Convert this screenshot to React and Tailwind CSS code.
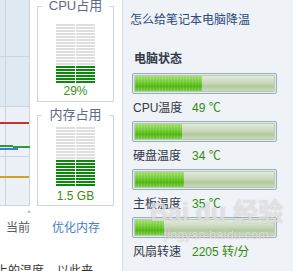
import React from 'react'

const FONT = { fontFamily: '"Liberation Sans", "Noto Sans CJK SC", sans-serif' }

// stripe meter like the old task manager
function Meter({ total = 20, on }) {
  const rows = Array.from({ length: total }, (_, i) => i >= total - on)
  return (
    <div className="flex flex-col gap-[1px]">
      {rows.map((lit, i) => (
        <div key={i} className="flex gap-[1px]">
          <div className={`h-[2px] w-[19px] ${lit ? 'bg-[#0a8a0a]' : 'bg-[#dedede]'}`} />
          <div className={`h-[2px] w-[19px] ${lit ? 'bg-[#0a8a0a]' : 'bg-[#dedede]'}`} />
        </div>
      ))}
    </div>
  )
}

function UsageBox({ title, on, total, value, top, text }) {
  return (
    <fieldset className="w-[77px] border border-[#cdd7e4] flex flex-col items-center">
      <legend className="mx-auto px-[7px] text-[13px] leading-[12px] text-[#5b6b88]">{title}</legend>
      <div className={top}>
        <Meter on={on} total={total} />
      </div>
      <div className={`text-[12px] leading-[14px] text-[#3b8f14] ${text}`}>{value}</div>
    </fieldset>
  )
}

function Bar({ pct }) {
  return (
    <div className="h-[21px] w-[145px] rounded-[2px] border border-[#9aabbf] bg-[#e4eaf1] p-[1px]">
      <div className="flex h-full w-full overflow-hidden rounded-[1px] border border-[#b9c8b0]">
        <div
          className="h-full bg-[repeating-linear-gradient(90deg,rgba(255,255,255,0.12)_0_1px,transparent_1px_3px),linear-gradient(to_bottom,#a4e070,#6cc82e_45%,#4fb512_70%,#78d443)]"
          style={{ width: `${pct}%` }}
        />
        <div className="h-full flex-1 bg-[linear-gradient(to_bottom,#e4ebdc,#c9d8bb_45%,#b3c9a0_70%,#cbdcbc)]" />
      </div>
    </div>
  )
}

function Stat({ label, value }) {
  return (
    <div className="flex h-[27px] items-center pl-[1px] text-[12px]">
      <span className="w-[59px] text-[#333a48]">{label}</span>
      <span className="text-[#2f8c0e]">{value}</span>
    </div>
  )
}

export default function App() {
  return (
    <div className="relative flex h-[271px] w-[293px] overflow-hidden bg-white" style={FONT}>
      {/* left part: graph + usage boxes */}
      <div className="flex w-[122px] flex-col">
        <div className="flex">
          <div className="w-[30px]">
            <div className="relative h-[206px] w-[30px] border-r border-b border-[#c9d5e3] bg-[linear-gradient(to_bottom,#dfe9f2_0,#dfe9f2_106px,#ebf1f7_106px)]">
              <div className="absolute left-[5px] top-0 h-full w-px bg-[#c9d5e3]" />
              <div className="absolute left-0 top-[56px] h-px w-full bg-[#c9d5e3]" />
              <div className="absolute left-0 top-[106px] h-px w-full bg-[#c9d5e3]" />
              <div className="absolute left-0 top-[156px] h-px w-full bg-[#c9d5e3]" />
              <div className="absolute left-0 top-[122px] h-[2px] w-full bg-[#c8302a]" />
              <div className="absolute left-0 top-[145px] h-[2px] w-[13px] bg-[#2e9a3a]" />
              <div className="absolute left-[13px] top-[146px] h-[2px] w-[17px] bg-[#2e9a3a]" />
              <div className="absolute left-0 top-[148px] h-[2px] w-[18px] bg-[#3a7fd0]" />
              <div className="absolute left-0 top-[176px] h-[2px] w-full bg-[#d4a020]" />
            </div>
            <div className="relative flex h-[42px] items-center justify-end">
              <span className="absolute right-[-2px] top-[2px] text-[6px] leading-none text-[#b8c4d2]">▲</span>
              <span className="mt-[1px] text-[12px] text-[#555b66]">当前</span>
            </div>
          </div>
          <div className="ml-[7px] flex w-[77px] flex-col">
            <UsageBox title="CPU占用" on={6} total={20} value="29%" top="mt-[12px]" text="mt-[1px] mb-[3px]" />
            <div className="h-[7px]" />
            <UsageBox title="内存占用" on={9} total={20} value="1.5 GB" top="mt-[6px]" text="mt-[3px] mb-[2px]" />
            <div className="flex h-[42px] items-center justify-center pl-[1px]">
              <span className="mt-[1px] text-[12px] text-[#4482c6]">优化内存</span>
            </div>
          </div>
        </div>
        <div className="mt-[14px] flex text-[12px] text-[#333]">
          <span className="ml-[-4px]">上的温度</span>
          <span className="ml-[13px]">以此来</span>
        </div>
      </div>

      {/* right panel */}
      <div className="flex flex-1 flex-col border-l border-[#d6dce6] bg-[#eff2f7] pl-[9px]">
        <div className="mt-[11px] ml-[-2px] text-[12px] leading-[18px] text-[#2c4a7a]">怎么给笔记本电脑降温</div>
        <div className="mt-[16px] flex h-[28px] items-center pl-[2px] text-[12px] font-bold text-[#333a48]">电脑状态</div>
        <Bar pct={48} />
        <Stat label="CPU温度" value="49 ℃" />
        <Bar pct={34} />
        <Stat label="硬盘温度" value="34 ℃" />
        <Bar pct={35} />
        <Stat label="主板温度" value="35 ℃" />
        <Bar pct={21} />
        <Stat label="风扇转速" value="2205 转/分" />
      </div>

      {/* baidu watermark */}
      <div className="pointer-events-none absolute left-[150px] top-[197px] flex flex-col items-center">
        <div className="text-[25px] font-bold leading-[30px] text-white/60 [text-shadow:0_0_1px_rgba(120,120,120,0.5)]">Bai du 经验</div>
        <div className="mt-[1px] text-[13px] leading-[14px] text-white/60 [text-shadow:0_0_1px_rgba(120,120,120,0.5)]">jingyan.baidu.com</div>
      </div>
    </div>
  )
}
